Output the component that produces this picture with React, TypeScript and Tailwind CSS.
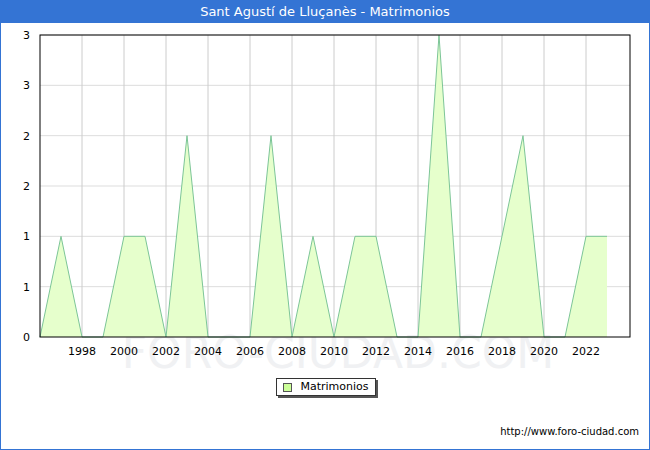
const data = [0, 1, 0, 0, 1, 1, 0, 2, 0, 0, 0, 2, 0, 1, 0, 1, 1, 0, 0, 3, 0, 0, 1, 2, 0, 0, 1, 1];

const X0 = 40;
const STEP = 21;
const Y0 = 337;
const UNIT = 302 / 3;

export default function App() {
    const pts = data.map((v, i) => [X0 + i * STEP, Y0 - v * UNIT]);
    const line = pts.map((p) => p.join(',')).join(' ');
    const area = `${X0},${Y0} ${line} ${X0 + (data.length - 1) * STEP},${Y0}`;
    const yLabels = ['3', '3', '2', '2', '1', '1', '0'];
    const years = [1998, 2000, 2002, 2004, 2006, 2008, 2010, 2012, 2014, 2016, 2018, 2020, 2022];

    return (
        <div className="w-[650px] h-[450px] flex flex-col border border-[#3474d4] border-t-0 bg-white" style={{ fontFamily: 'Verdana, "DejaVu Sans", sans-serif' }}>
            <div className="h-[23px] bg-[#3474d4] text-white text-[13px] flex items-center justify-center shrink-0">Sant Agustí de Lluçanès - Matrimonios</div>
            <svg width="648" height="347" className="shrink-0" viewBox="1 23 648 347">
                <text x="338" y="368" textAnchor="middle" fontSize="44" fill="#f0f1f3" fontFamily="DejaVu Sans, sans-serif">FORO-CIUDAD.COM</text>
                {[0, 1, 2, 3, 4, 5].map((i) => (
                    <line key={i} x1={X0} x2={630} y1={35 + i * (302 / 6)} y2={35 + i * (302 / 6)} stroke="#dddddd" />
                ))}
                {years.map((y) => {
                    const x = X0 + (y - 1996) * STEP;
                    return <line key={y} x1={x} x2={x} y1={35} y2={Y0} stroke="#cccccc" />;
                })}
                <polygon points={area} fill="#e6ffcc" />
                <polyline points={line} fill="none" stroke="#7cc597" strokeWidth="1" />
                <rect x={X0} y={35} width={590} height={302} fill="none" stroke="#000" strokeWidth="1" />
                {yLabels.map((l, i) => (
                    <text key={i} x={30} y={39 + i * (302 / 6)} textAnchor="end" fontSize="11" fill="#000">{l}</text>
                ))}
                {years.map((y) => (
                    <text key={y} x={X0 + (y - 1996) * STEP} y={355} textAnchor="middle" fontSize="11" fill="#000">{y}</text>
                ))}
            </svg>
            <div className="flex justify-center mt-[8px] pl-[2px]">
                <div className="flex items-center gap-[8px] border border-[#333] bg-white h-[18px] px-[6px] text-[11px] shadow-[2px_2px_0_#555]">
                    <span className="w-[9px] h-[9px] bg-[#ccff99] border border-[#555]" />
                    <span>Matrimonios</span>
                </div>
            </div>
            <div className="flex-1" />
            <div className="text-[10px] text-right pr-[10px] pb-[10px]">http://www.foro-ciudad.com</div>
        </div>
    );
}
